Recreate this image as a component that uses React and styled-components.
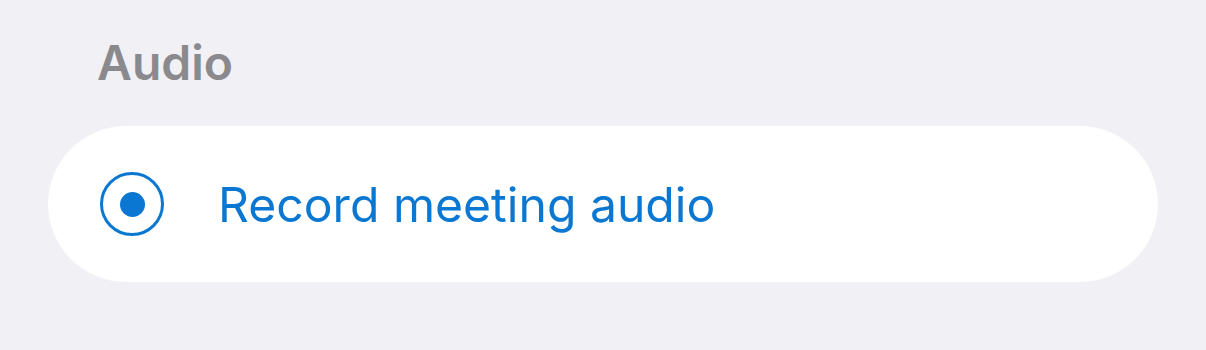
import React from 'react';
import styled, { createGlobalStyle } from 'styled-components';

const GlobalStyle = createGlobalStyle`
  html, body {
    margin: 0;
    padding: 0;
    background: #f0f0f5;
    font-family: Inter, "Noto Sans", sans-serif;
  }
`;

const Page = styled.div`
  width: 1206px;
  height: 350px;
  box-sizing: border-box;
  padding: 35px 48px 0 48px;
  display: flex;
  flex-direction: column;
`;

const SectionTitle = styled.h2`
  margin: 0 0 0 49px;
  font-size: 48px;
  line-height: 56px;
  font-weight: 600;
  color: #8a898e;
  letter-spacing: 0;
`;

const Card = styled.div`
  margin-top: 35px;
  height: 156px;
  border-radius: 78px;
  background: #ffffff;
  display: flex;
  align-items: center;
  padding-left: 52px;
  gap: 54px;
`;

const Radio = styled.span`
  width: 64px;
  height: 64px;
  box-sizing: border-box;
  border-radius: 50%;
  border: 3.5px solid ${({ color }) => color};
  display: flex;
  align-items: center;
  justify-content: center;
  flex-shrink: 0;

  &::after {
    content: '';
    width: 25px;
    height: 25px;
    border-radius: 50%;
    background: ${({ color }) => color};
    display: ${({ checked }) => (checked ? 'block' : 'none')};
  }
`;

const Label = styled.span`
  font-size: 48.1px;
  font-weight: 400;
  color: ${({ color }) => color};
  letter-spacing: 0;
`;

const accent = '#0a78d2';

const App = () => (
  <>
    <GlobalStyle />
    <Page>
      <SectionTitle>Audio</SectionTitle>
      <Card>
        <Radio color={accent} checked />
        <Label color={accent}>Record meeting audio</Label>
      </Card>
    </Page>
  </>
);

export default App;
